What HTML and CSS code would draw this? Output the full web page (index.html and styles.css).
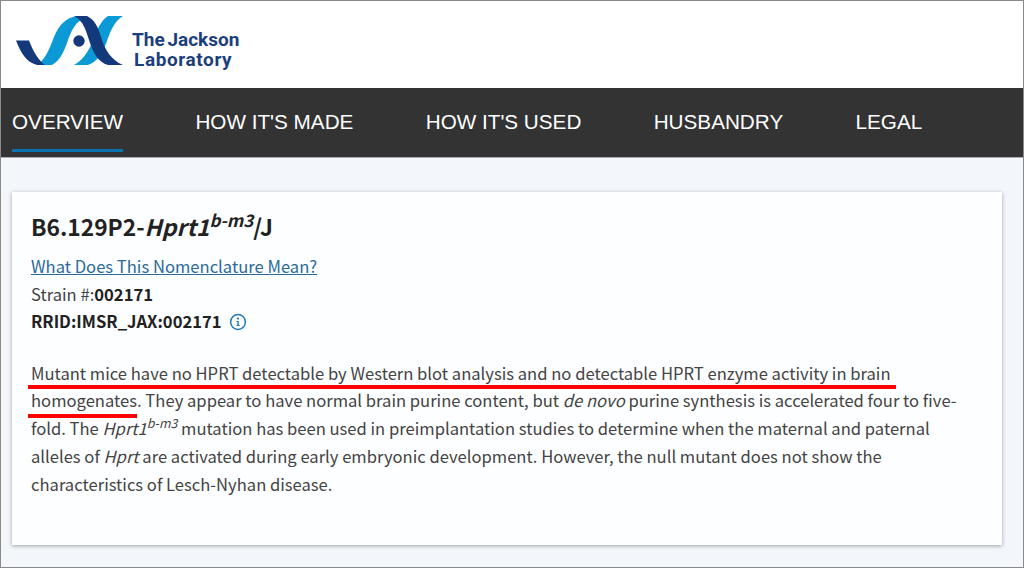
FILE: index.html
```html
<!DOCTYPE html>
<html lang="en">
<head>
    <meta charset="UTF-8">
    <meta name="viewport" content="width=device-width, initial-scale=1.0">
    <title>B6.129P2-Hprt1/J</title>
    <link rel="stylesheet" href="styles.css">
</head>
<body>
    <div class="frame">
        <!-- Logo -->
        <header class="site-header">
            <svg class="logo-mark" width="108" height="52" viewBox="0 0 108 52" aria-hidden="true">
                <path class="logo-light" d="M62 1 C50 2 43 10 38 22 C33 35 29 45 21 50 H36 C43 46 47 39 51 28 C55 16 59 6 72 1 Z"/>
                <path class="logo-light" d="M107 1 H92 C86 5 83 11 80 18 C75 32 69 44 58 50 H72 C81 47 87 38 91 26 C95 14 99 6 107 1 Z"/>
                <path class="logo-dark" d="M0 25.5 H13 C17 36 22 45 29 50 H21 C10 47 5 38 0 25.5 Z"/>
                <path class="logo-dark" d="M58 1 H71 C79 5 82 12 85 22 C89 35 95 45 107 50 H92 C82 47 78 39 74 28 C70 16 68 6 58 1 Z"/>
                <circle class="logo-dark" cx="63" cy="26" r="5.7"/>
            </svg>
            <div class="logo-text">
                <div class="logo-line-one">The Jackson</div>
                <div class="logo-line-two">Laboratory</div>
            </div>
        </header>

        <!-- Tabs -->
        <nav class="tabs">
            <a class="tab active" href="#">OVERVIEW</a>
            <a class="tab" href="#">HOW IT'S MADE</a>
            <a class="tab" href="#">HOW IT'S USED</a>
            <a class="tab" href="#">HUSBANDRY</a>
            <a class="tab" href="#">LEGAL</a>
        </nav>

        <main class="content">
            <section class="card">
                <h1 class="strain-title">B6.129P2-<em>Hprt1<sup>b-m3</sup></em>/J</h1>
                <p class="meta-line"><a href="#">What Does This Nomenclature Mean?</a></p>
                <p class="meta-line">Strain #:<strong>002171</strong></p>
                <p class="meta-line rrid">
                    <strong>RRID:IMSR_JAX:002171</strong>
                    <svg class="info-icon" width="18" height="18" viewBox="0 0 18 18" aria-hidden="true">
                        <circle cx="9" cy="9" r="7.4" fill="none" stroke="#1f7ab8" stroke-width="1.5"/>
                        <circle cx="9" cy="5.6" r="1.1" fill="#1f7ab8"/>
                        <path d="M7.4 8 H9.8 V12 H10.8 V13 H7.4 V12 H8.4 V9 H7.4 Z" fill="#1f7ab8"/>
                    </svg>
                </p>
                <div class="description">
                    <p>Mutant mice have no HPRT detectable by Western blot analysis and no detectable HPRT enzyme activity in brain homogenates. They appear to have normal brain purine content, but <em>de novo</em> purine synthesis is accelerated four to five-fold. The <em>Hprt1<sup>b-m3</sup></em> mutation has been used in preimplantation studies to determine when the maternal and paternal alleles of <em>Hprt</em> are activated during early embryonic development. However, the null mutant does not show the characteristics of Lesch-Nyhan disease.</p>
                    <!-- red annotation strokes over the text -->
                    <span class="mark mark-one"></span>
                    <span class="mark mark-two"></span>
                </div>
            </section>
        </main>
    </div>
</body>
</html>
```

FILE: styles.css
```css
/* General Styles */
html, body {
    margin: 0;
    padding: 0;
}

body {
    width: 1024px;
    height: 568px;
    overflow: hidden;
    font-family: "Noto Sans CJK SC", "Noto Sans", sans-serif;
    background-color: #f3f6fb;
}

.frame {
    box-sizing: border-box;
    height: 568px;
    border: 1px solid #8a8a8a;
    display: flex;
    flex-direction: column;
}

/* Header */
.site-header {
    height: 87px;
    background-color: #fff;
    display: flex;
    align-items: center;
    padding-left: 15px;
    gap: 8px;
}

.logo-mark {
    margin-top: -7px;
}

.logo-light {
    fill: #0b9ad6;
}

.logo-dark {
    fill: #14397a;
}

.logo-text {
    font-family: Roboto, sans-serif;
    font-weight: 700;
    font-size: 19px;
    line-height: 20px;
    color: #1b3f7c;
    margin-top: 11px;
}

.logo-line-one {
    word-spacing: -2px;
}

.logo-line-two {
    margin-left: 2px;
    letter-spacing: 0.6px;
}

/* Tabs */
.tabs {
    height: 69px;
    background-color: #333;
    display: flex;
    align-items: flex-start;
    gap: 72.3px;
    padding-left: 11px;
    border-bottom: 1px solid #aaa;
}

.tab {
    font-family: "Liberation Sans", Arial, sans-serif;
    font-size: 20.7px;
    color: #fff;
    text-decoration: none;
    padding: 20px 0 13px;
    line-height: 28px;
}

.tab.active {
    border-bottom: 3px solid #0b74b0;
}

/* Card */
.content {
    flex: 1;
    padding: 34px 21px 22px 11px;
    min-height: 0;
}

.card {
    box-sizing: border-box;
    height: 353px;
    background-color: #fdfeff;
    box-shadow: 0 1px 4px rgba(0, 0, 0, 0.35);
    padding: 20px 19px;
    color: #444;
}

.strain-title {
    margin: 0 0 11px;
    font-size: 22.75px;
    line-height: 30px;
    font-weight: 700;
    color: #222;
}

sup {
    line-height: 0;
    font-size: 0.75em;
}

.meta-line {
    margin: 0;
    font-size: 16.6px;
    line-height: 27.5px;
}

.meta-line a {
    color: #2b6a99;
}

.meta-line strong {
    color: #222;
}

.rrid {
    display: flex;
    align-items: center;
    gap: 7px;
}

.description {
    position: relative;
    margin-top: 24px;
    font-size: 16.6px;
    line-height: 27.9px;
    color: #444;
}

.description p {
    margin: 0;
}

.mark {
    position: absolute;
    height: 4px;
    background-color: #f00;
}

.mark-one {
    left: -3px;
    top: 25px;
    width: 868px;
}

.mark-two {
    left: -3px;
    top: 54px;
    width: 109px;
}
```
